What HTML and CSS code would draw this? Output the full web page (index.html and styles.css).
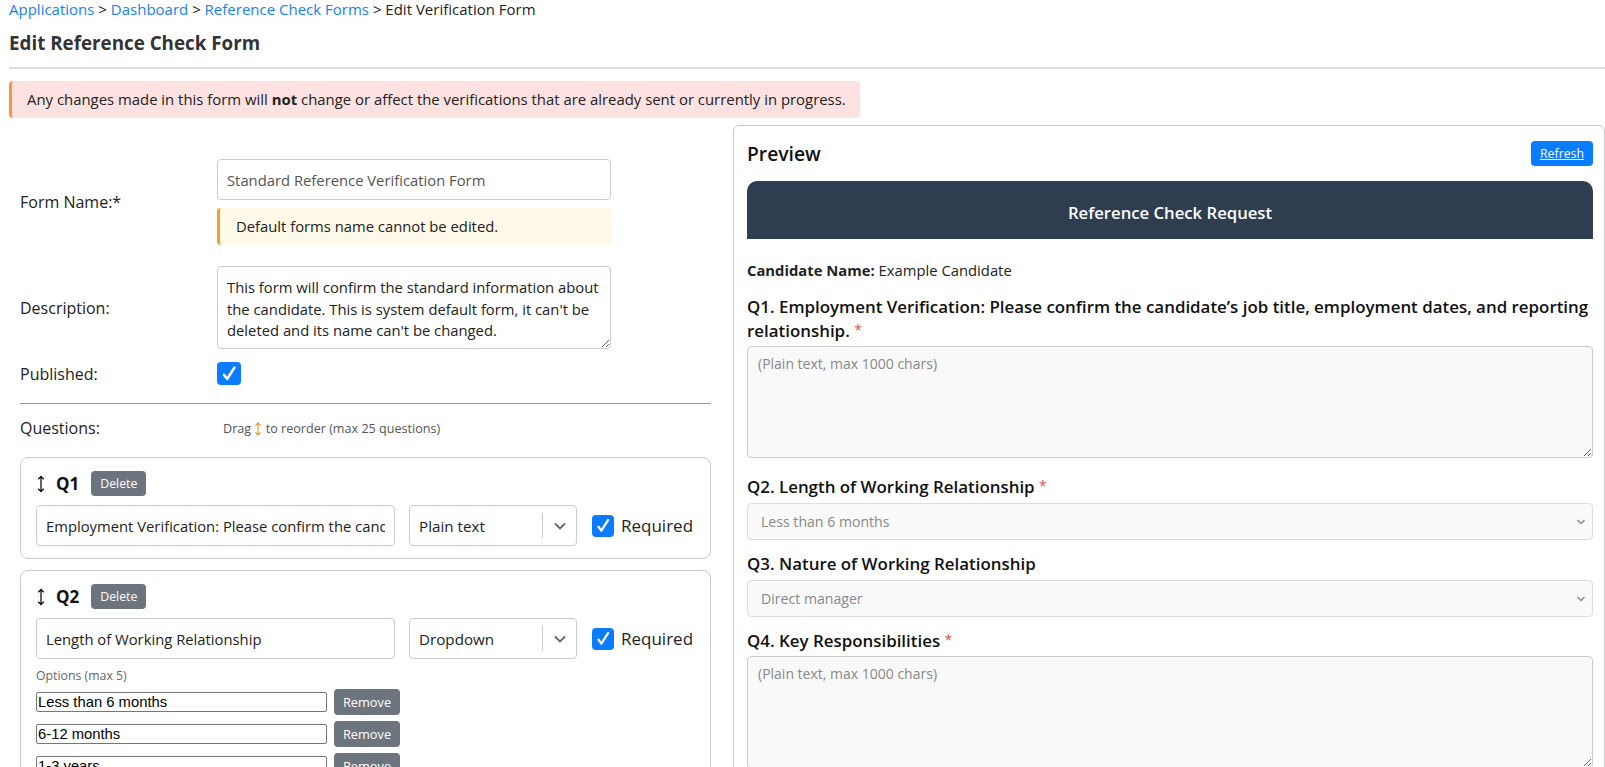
FILE: index.html
```html
<!DOCTYPE html>
<html lang="en">
<head>
  <meta charset="UTF-8">
  <meta name="viewport" content="width=device-width, initial-scale=1.0">
  <title>Edit Reference Check Form</title>
  <link rel="stylesheet" href="styles.css">
</head>

<body>
  <nav class="crumbs">
    <a href="#">Applications</a> &gt; <a href="#">Dashboard</a> &gt; <a href="#">Reference Check Forms</a> &gt; <span>Edit Verification Form</span>
  </nav>
  <h2 class="page-title">Edit Reference Check Form</h2>
  <hr class="title-rule">
  <div class="notice">Any changes made in this form will <strong>not</strong> change or affect the verifications that are already sent or currently in progress.</div>

  <div class="layout">
    <section class="editor">
      <div class="field-row">
        <label class="field-label">Form Name:*</label>
        <div class="field-control">
          <input class="text-input muted" type="text" value="Standard Reference Verification Form" readonly>
          <div class="warn">Default forms name cannot be edited.</div>
        </div>
      </div>

      <div class="field-row desc-row">
        <label class="field-label">Description:</label>
        <div class="field-control">
          <textarea class="desc-input" readonly>This form will confirm the standard information about the candidate. This is system default form, it can't be deleted and its name can't be changed.</textarea>
        </div>
      </div>

      <div class="field-row pub-row">
        <label class="field-label">Published:</label>
        <span class="check big">
          <svg viewBox="0 0 24 24" width="24" height="24"><path d="M7 12.8 L10.2 17 L17.5 5.5" fill="none" stroke="#fff" stroke-width="2.4" stroke-linecap="round" stroke-linejoin="round"/></svg>
        </span>
      </div>

      <hr class="rule">

      <div class="questions-head">
        <span class="field-label">Questions:</span>
        <span class="hint">Drag
          <svg class="drag-mini" viewBox="0 0 8 14" width="8" height="14"><path d="M4 1v12M1.5 3.5L4 1l2.5 2.5M1.5 10.5L4 13l2.5-2.5" fill="none" stroke="#e8952a" stroke-width="1.1"/></svg>
          to reorder (max 25 questions)</span>
      </div>

      <div class="q-card">
        <div class="q-head">
          <svg class="drag" viewBox="0 0 10 18" width="10" height="18"><path d="M5 1.5v15M2.2 4.3L5 1.5l2.8 2.8M2.2 13.7L5 16.5l2.8-2.8" fill="none" stroke="#111" stroke-width="1.3"/></svg>
          <span class="q-num">Q1</span>
          <button class="btn-gray">Delete</button>
        </div>
        <div class="q-row">
          <input class="text-input q-text" type="text" value="Employment Verification: Please confirm the candidate's job title, employment dates, and reporting relationship." readonly>
          <div class="type-select">
            <span class="type-value">Plain text</span>
            <span class="type-sep"></span>
            <span class="type-arrow"><svg viewBox="0 0 14 10" width="14" height="10"><path d="M2 2.5l5 5 5-5" fill="none" stroke="#666" stroke-width="1.8"/></svg></span>
          </div>
          <span class="check">
            <svg viewBox="0 0 24 24" width="22" height="22"><path d="M7 12.8 L10.2 17 L17.5 5.5" fill="none" stroke="#fff" stroke-width="2.4" stroke-linecap="round" stroke-linejoin="round"/></svg>
          </span>
          <span class="req-label">Required</span>
        </div>
      </div>

      <div class="q-card">
        <div class="q-head">
          <svg class="drag" viewBox="0 0 10 18" width="10" height="18"><path d="M5 1.5v15M2.2 4.3L5 1.5l2.8 2.8M2.2 13.7L5 16.5l2.8-2.8" fill="none" stroke="#111" stroke-width="1.3"/></svg>
          <span class="q-num">Q2</span>
          <button class="btn-gray">Delete</button>
        </div>
        <div class="q-row">
          <input class="text-input q-text" type="text" value="Length of Working Relationship" readonly>
          <div class="type-select">
            <span class="type-value">Dropdown</span>
            <span class="type-sep"></span>
            <span class="type-arrow"><svg viewBox="0 0 14 10" width="14" height="10"><path d="M2 2.5l5 5 5-5" fill="none" stroke="#666" stroke-width="1.8"/></svg></span>
          </div>
          <span class="check">
            <svg viewBox="0 0 24 24" width="22" height="22"><path d="M7 12.8 L10.2 17 L17.5 5.5" fill="none" stroke="#fff" stroke-width="2.4" stroke-linecap="round" stroke-linejoin="round"/></svg>
          </span>
          <span class="req-label">Required</span>
        </div>
        <div class="options-label">Options (max 5)</div>
        <div class="opt-row"><input class="opt-input" type="text" value="Less than 6 months"><button class="btn-gray opt-btn">Remove</button></div>
        <div class="opt-row"><input class="opt-input" type="text" value="6-12 months"><button class="btn-gray opt-btn">Remove</button></div>
        <div class="opt-row"><input class="opt-input" type="text" value="1-3 years"><button class="btn-gray opt-btn">Remove</button></div>
        <div class="opt-row"><input class="opt-input" type="text" value="3-5 years"><button class="btn-gray opt-btn">Remove</button></div>
      </div>
    </section>

    <section class="preview">
      <div class="preview-head">
        <h3>Preview</h3>
        <button class="btn-blue">Refresh</button>
      </div>
      <div class="rc-header">Reference Check Request</div>
      <p class="candidate"><strong>Candidate Name:</strong> Example Candidate</p>

      <div class="pq-label">Q1. Employment Verification: Please confirm the candidate’s job title, employment dates, and reporting relationship. <span class="star">*</span></div>
      <textarea class="pq-area" placeholder="(Plain text, max 1000 chars)"></textarea>

      <div class="pq-label">Q2. Length of Working Relationship <span class="star">*</span></div>
      <div class="pq-select">
        <span>Less than 6 months</span>
        <svg viewBox="0 0 10 8" width="10" height="8"><path d="M1.5 2l3.5 3.5L8.5 2" fill="none" stroke="#888" stroke-width="1.5"/></svg>
      </div>

      <div class="pq-label">Q3. Nature of Working Relationship</div>
      <div class="pq-select">
        <span>Direct manager</span>
        <svg viewBox="0 0 10 8" width="10" height="8"><path d="M1.5 2l3.5 3.5L8.5 2" fill="none" stroke="#888" stroke-width="1.5"/></svg>
      </div>

      <div class="pq-label">Q4. Key Responsibilities <span class="star">*</span></div>
      <textarea class="pq-area" placeholder="(Plain text, max 1000 chars)"></textarea>
    </section>
  </div>
</body>
</html>
```

FILE: styles.css
```css
body {
  margin: 0;
  padding: 0 0 0 9px;
  font-family: "Open Sans", sans-serif;
  color: #222;
  background: #fff;
}

.crumbs {
  font-size: 15px;
  line-height: 18px;
  color: #222;
}

.crumbs a {
  color: #1a7ff0;
  text-decoration: none;
}

.page-title {
  margin: 12px 0 0 0;
  font-size: 18.8px;
  line-height: 26px;
  font-weight: 700;
  color: #333;
}

.title-rule {
  margin: 11px 0 0 0;
  border: 0;
  border-top: 2px solid #ddd;
}

.notice {
  width: fit-content;
  margin-top: 12px;
  padding: 8px 14px 8px 15px;
  font-size: 14.9px;
  line-height: 21px;
  background: #fde2e1;
  border-left: 3px solid #f0a030;
  border-radius: 4px;
}

.layout {
  display: flex;
  align-items: flex-start;
  gap: 11px;
  margin-top: 7px;
}

.editor {
  width: 713px;
  flex: none;
  box-sizing: border-box;
  padding: 34px 11px 0 11px;
}

.field-row {
  display: flex;
  align-items: center;
}

.field-label {
  width: 197px;
  flex: none;
  font-size: 16px;
  line-height: 22px;
  color: #222;
}

.field-control {
  width: 394px;
}

.text-input {
  display: block;
  width: 100%;
  height: 41px;
  box-sizing: border-box;
  padding: 0 9px;
  border: 1px solid #ccc;
  border-radius: 4px;
  font-family: "Open Sans", sans-serif;
  font-size: 14.8px;
  color: #222;
  background: #fff;
  outline: none;
}

.text-input.muted {
  color: #555;
}

.warn {
  margin-top: 8px;
  padding: 8px 16px;
  font-size: 14.8px;
  line-height: 21px;
  background: #fef9e8;
  border-left: 3px solid #f0a030;
  border-radius: 4px;
}

.desc-row {
  margin-top: 21px;
}

.desc-input {
  display: block;
  width: 100%;
  height: 83px;
  box-sizing: border-box;
  padding: 10px 9px 6px 9px;
  border: 1px solid #ccc;
  border-radius: 4px;
  font-family: "Open Sans", sans-serif;
  font-size: 14.8px;
  line-height: 21.5px;
  color: #222;
  resize: vertical;
  overflow: hidden;
  outline: none;
}

.pub-row {
  margin-top: 13px;
}

.check {
  width: 22px;
  height: 22px;
  flex: none;
  display: inline-flex;
  align-items: center;
  justify-content: center;
  background: #0a7cff;
  border-radius: 4px;
}

.check.big {
  width: 24px;
  height: 23px;
}

.rule {
  margin: 18px 0 0 0;
  border: 0;
  border-top: 1px solid #999;
}

.questions-head {
  display: flex;
  align-items: center;
  margin-top: 13px;
}

.hint {
  padding-left: 6px;
  font-size: 12.6px;
  color: #555;
}

.drag-mini {
  vertical-align: -3px;
}

.q-card {
  margin-top: 18px;
  padding: 13px 15px 12px 15px;
  border: 1px solid #ccc;
  border-radius: 8px;
}

.q-card + .q-card {
  margin-top: 11px;
}

.q-head {
  display: flex;
  align-items: center;
  height: 25px;
}

.q-num {
  margin-left: 10px;
  font-size: 17px;
  font-weight: 700;
  color: #111;
}

.btn-gray {
  margin-left: 12px;
  height: 25px;
  padding: 0 9px;
  border: 0;
  border-radius: 4px;
  background: #6c757d;
  color: #fff;
  font-family: "Open Sans", sans-serif;
  font-size: 12.3px;
}

.q-row {
  display: flex;
  align-items: center;
  margin-top: 9px;
}

.q-text {
  width: 359px;
  flex: none;
}

.type-select {
  width: 168px;
  height: 41px;
  flex: none;
  box-sizing: border-box;
  margin-left: 14px;
  display: flex;
  align-items: center;
  border: 1px solid #ccc;
  border-radius: 4px;
}

.type-value {
  flex: 1;
  padding-left: 9px;
  font-size: 15.2px;
}

.type-sep {
  width: 1px;
  height: 25px;
  background: #ccc;
}

.type-arrow {
  width: 33px;
  display: flex;
  justify-content: center;
}

.q-row .check {
  margin-left: 15px;
}

.req-label {
  margin-left: 7px;
  font-size: 17px;
  color: #222;
}

.options-label {
  margin-top: 9px;
  font-size: 12.3px;
  line-height: 16px;
  color: #666;
}

.opt-row {
  display: flex;
  align-items: center;
  margin-top: 5px;
}

.opt-row + .opt-row {
  margin-top: 6px;
}

.opt-input {
  width: 291px;
  height: 20px;
  box-sizing: border-box;
  padding: 0 1px;
  border: 1px solid #767676;
  border-radius: 2px;
  font-family: "Liberation Sans", Arial, sans-serif;
  font-size: 14.8px;
  color: #000;
}

.opt-btn {
  margin-left: 7px;
  height: 26px;
  width: 66px;
  padding: 0;
  font-size: 12.8px;
}

.preview {
  flex: 1;
  min-width: 0;
  padding: 15px 11px 20px 13px;
  border: 1px solid #ccc;
  border-radius: 6px;
}

.preview-head {
  display: flex;
  align-items: center;
  justify-content: space-between;
  height: 25px;
}

.preview-head h3 {
  margin: 0;
  font-size: 19.3px;
  font-weight: 600;
  color: #111;
}

.btn-blue {
  height: 25px;
  width: 62px;
  padding: 0;
  border: 0;
  border-radius: 4px;
  background: #0a7cff;
  color: #fff;
  font-family: "Open Sans", sans-serif;
  font-size: 12.3px;
  text-decoration: underline;
}

.rc-header {
  margin-top: 15px;
  height: 52px;
  padding-top: 6px;
  line-height: 52px;
  text-align: center;
  background: #2e3e50;
  color: #fff;
  font-size: 16.7px;
  font-weight: 600;
  border-radius: 10px 10px 0 0;
}

.candidate {
  margin: 21px 0 0 0;
  font-size: 14.8px;
  line-height: 20px;
}

.pq-label {
  margin-top: 12px;
  font-size: 16.9px;
  line-height: 24px;
  font-weight: 600;
  color: #111;
}

.candidate + .pq-label {
  margin-top: 15px;
}

.pq-area + .pq-label {
  margin-top: 17px;
}

.star {
  color: #d9534f;
  font-weight: 400;
  font-size: 14px;
  line-height: 1;
  vertical-align: 2px;
}

.pq-area {
  display: block;
  width: 100%;
  height: 112px;
  box-sizing: border-box;
  margin: 3px 0 5px 0;
  padding: 7px 10px;
  border: 1px solid #ccc;
  border-radius: 4px;
  background: #f9f9f9;
  font-family: "Open Sans", sans-serif;
  font-size: 14px;
  line-height: 20px;
  resize: vertical;
  outline: none;
}

.pq-area::placeholder {
  color: #888;
}

.pq-select {
  margin-top: 4px;
  height: 37px;
  box-sizing: border-box;
  display: flex;
  align-items: center;
  justify-content: space-between;
  padding: 0 6px 0 13px;
  border: 1px solid #ddd;
  border-radius: 4px;
  background: #fafafa;
  font-size: 14.1px;
  color: #888;
}
```
